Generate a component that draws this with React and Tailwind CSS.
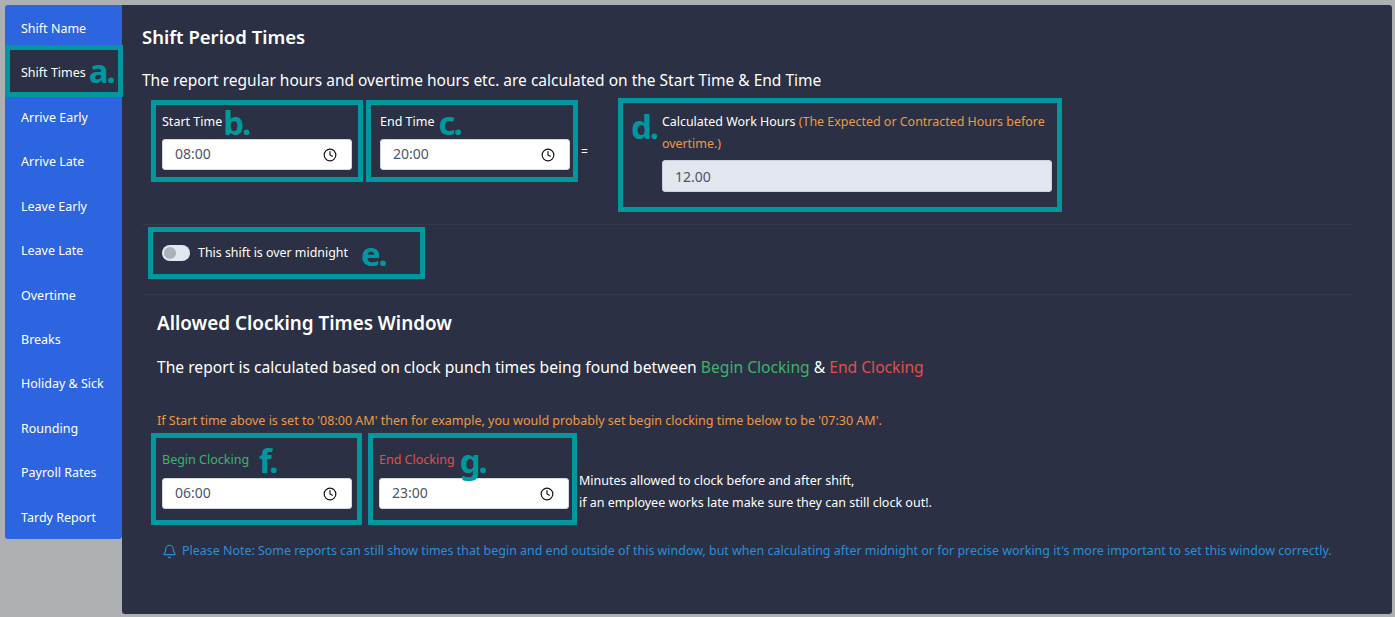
import { Bell, Clock } from 'lucide-react'

const FONT = "font-['Noto_Sans','Open_Sans',sans-serif]"

const navItems = [
  'Shift Name',
  'Shift Times',
  'Arrive Early',
  'Arrive Late',
  'Leave Early',
  'Leave Late',
  'Overtime',
  'Breaks',
  'Holiday & Sick',
  'Rounding',
  'Payroll Rates',
  'Tardy Report',
]

function Letter({ children, className = '' }) {
  return (
    <span
      className={`text-[33px] leading-none font-bold text-[#00989f] tracking-[-2px] ${className}`}
    >
      {children}
    </span>
  )
}

function Sidebar() {
  return (
    <nav className="w-[117px] h-[534px] shrink-0 pt-[2px] rounded-l-[3px] rounded-br-[3px] bg-[#2d65e0] text-[12.5px] text-white">
      {navItems.map((item) =>
        item === 'Shift Times' ? (
          <div
            key={item}
            className="relative z-10 -mt-[6.5px] -mb-[1px] w-[118px] h-[52px] pl-[11px] pt-[5px] flex items-center gap-[3px] border-[5px] border-[#00989f] bg-[#2b3044]"
          >
            <span>{item}</span>
            <Letter className="pb-[5px]">a.</Letter>
          </div>
        ) : (
          <div key={item} className="h-[44.45px] pl-[16px] flex items-center">
            {item}
          </div>
        )
      )}
    </nav>
  )
}

function TimeInput({ value }) {
  return (
    <div className="h-[31px] flex items-center justify-between pl-[12px] pr-[14px] rounded-[3px] bg-white border border-[#d5d8e0] text-[14px] text-[#4a5568]">
      <span className="pb-[2px]">{value}</span>
      <Clock size={14} strokeWidth={2} className="text-[#111]" />
    </div>
  )
}

function TimeBox({ label, letter, value, labelColor = 'text-white', className, labelClass }) {
  return (
    <div className={`border-[5px] border-[#00989f] ${className}`}>
      <div className={`flex items-center text-[12.5px] ${labelClass} ${labelColor}`}>
        <span>{label}</span>
        <Letter>{letter}</Letter>
      </div>
      <TimeInput value={value} />
    </div>
  )
}

function Toggle() {
  return (
    <div className="w-[28px] h-[16px] p-[2px] rounded-full bg-[#e2e6ee]">
      <div className="size-[12px] rounded-full bg-[#adb1ba]" />
    </div>
  )
}

export default function App() {
  return (
    <div
      className={`${FONT} h-[617px] overflow-hidden bg-[#adafb2] pt-[5px] pl-[5px] pr-[3px] flex items-start`}
    >
      <Sidebar />

      <main className="flex-1 h-[609px] rounded-r-[3px] rounded-bl-[3px] bg-[#2b3044] text-white pl-[20px]">
        <h2 className="pt-[20px] text-[18.5px] leading-[24px] font-semibold">
          Shift Period Times
        </h2>
        <p className="mt-[20px] text-[15.5px] leading-[22px]">
          The report regular hours and overtime hours etc. are calculated on the
          Start Time &amp; End Time
        </p>

        <div className="mt-[7px] ml-[9px] flex items-start">
          <TimeBox
            label="Start Time"
            letter="b."
            value="08:00"
            labelClass="h-[34px] gap-[1px]"
            className="mt-[2px] w-[212px] h-[82px] pl-[6px] pr-[6px]"
          />
          <TimeBox
            label="End Time"
            letter="c."
            value="20:00"
            labelClass="h-[34px] gap-[4px]"
            className="mt-[2px] ml-[3px] w-[212px] h-[82px] pl-[9px] pr-[3px]"
          />
          <span className="mt-[46px] ml-[3px] text-[12px] leading-[16px]">=</span>
          <div className="ml-[30px] w-[444px] h-[114px] border-[5px] border-[#00989f] pl-[8px] pr-[5px] flex gap-[1px]">
            <Letter className="mt-[7px] w-[30px] shrink-0">d.</Letter>
            <div className="flex-1 pt-[8px]">
              <p className="text-[12.45px] leading-[21.5px]">
                Calculated Work Hours{' '}
                <span className="text-[#ed9a45]">
                  (The Expected or Contracted Hours before
                </span>
                <br />
                <span className="text-[#ed9a45]">overtime.)</span>
              </p>
              <div className="mt-[6px] h-[32px] flex items-center pl-[12px] rounded-[3px] bg-[#e2e6ee] border border-[#cdd1da] text-[14px] text-[#4a5568]">
                12.00
              </div>
            </div>
          </div>
        </div>

        <div className="mt-[12px] mr-[40px] border-t border-[#343a4e]">
          <div className="mt-[2px] ml-[6px] w-[277px] h-[52px] border-[5px] border-[#00989f] pl-[9px] flex items-center">
            <Toggle />
            <span className="ml-[8px] text-[12.4px]">This shift is over midnight</span>
            <Letter className="ml-[13px]">e.</Letter>
          </div>
        </div>

        <div className="mt-[15px] mr-[40px] border-t border-[#343a4e] pl-[15px]">
          <h2 className="pt-[16px] text-[18.85px] leading-[24px] font-semibold">
            Allowed Clocking Times Window
          </h2>
          <p className="mt-[21px] text-[15.63px] leading-[22px]">
            The report is calculated based on clock punch times being found between{' '}
            <span className="text-[#3fb36b]">Begin Clocking</span> &amp;{' '}
            <span className="text-[#e04f4f]">End Clocking</span>
          </p>
          <p className="mt-[34px] text-[12.53px] leading-[18px] text-[#ed9a45]">
            If Start time above is set to '08:00 AM' then for example, you would
            probably set begin clocking time below to be '07:30 AM'.
          </p>
        </div>

        <div className="mt-[3px] ml-[9px] flex items-start">
          <TimeBox
            label="Begin Clocking"
            letter="f."
            value="06:00"
            labelClass="h-[36px] gap-[10px]"
            labelColor="text-[#3fb36b]"
            className="w-[211px] h-[92px] pt-[4px] pl-[6px] pr-[5px]"
          />
          <TimeBox
            label="End Clocking"
            letter="g."
            value="23:00"
            labelClass="h-[36px] gap-[5px]"
            labelColor="text-[#e04f4f]"
            className="ml-[6px] w-[209px] h-[92px] pt-[4px] pl-[6px] pr-[3px]"
          />
          <p className="mt-[37px] ml-[2px] text-[12.5px] leading-[22px]">
            Minutes allowed to clock before and after shift,
            <br />
            if an employee works late make sure they can still clock out!.
          </p>
        </div>

        <div className="mt-[17px] ml-[20px] flex items-center gap-[5px] text-[12.44px] leading-[18px] text-[#2b8fd6]">
          <Bell size={15} strokeWidth={1.8} />
          <span>
            Please Note: Some reports can still show times that begin and end outside
            of this window, but when calculating after midnight or for precise working
            it's more important to set this window correctly.
          </span>
        </div>
      </main>
    </div>
  )
}
